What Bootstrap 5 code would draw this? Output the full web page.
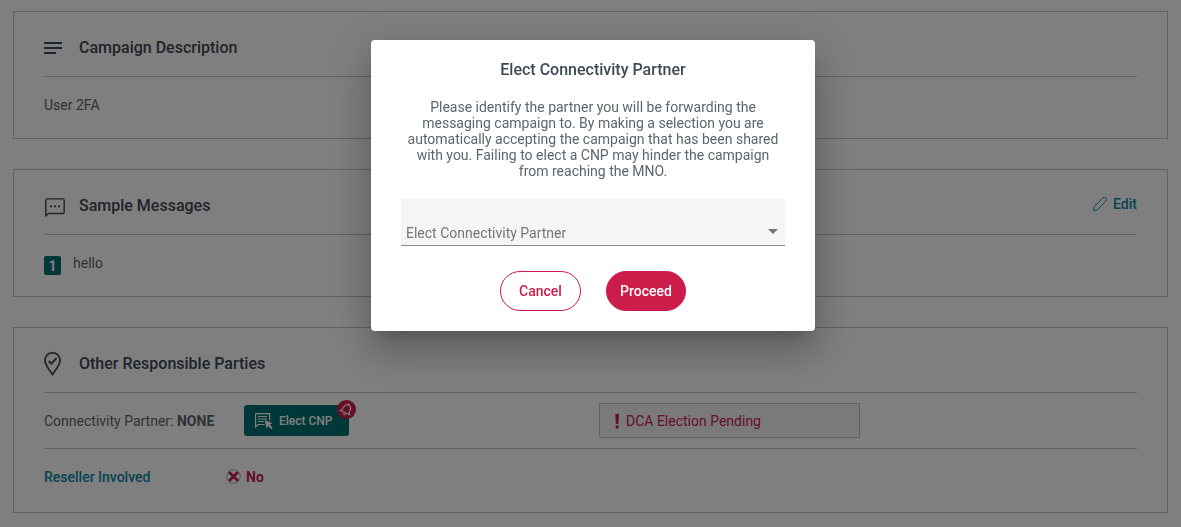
<!DOCTYPE html>
<html lang="en">
<head>
<meta charset="utf-8">
<meta name="viewport" content="width=device-width, initial-scale=1">
<title>Campaign details</title>
<link href="https://cdn.jsdelivr.net/npm/bootstrap@5.3.0/dist/css/bootstrap.min.css" rel="stylesheet">
<style>
  :root { --ink: #3f4a54; --soft: #5b666d; --line: #bcc4ca; --teal: #007074; --link: #0a88a2; --crimson: #cc1c4a; }
  body { font-family: Roboto, "Liberation Sans", sans-serif; font-size: 14px; line-height: 20px; color: var(--soft); padding: 11px 13px; }
  .panel-list { gap: 30px; }
  .panel { border: 1px solid var(--line); padding: 0 30px 5px; }
  .panel-parties { padding-bottom: 7px; }
  .panel-head { height: 65px; padding-top: 8px; border-bottom: 1px solid var(--line); }
  .panel-head h2, .modal-title { font-size: 16px; line-height: 24px; font-weight: 500; color: var(--ink); }
  .panel-icon { width: 35px; color: var(--ink); }
  .panel-line { height: 56px; }
  .panel-line.ruled { border-bottom: 1px solid var(--line); }
  .teal-link { color: var(--link); font-weight: 500; text-decoration: none; }
  .label-col { width: 200px; }
  .reseller-col { width: 182px; }
  .count-tag { width: 17px; height: 19px; border-radius: 2px; background: var(--teal); color: #fff; font-weight: 700; text-align: center; line-height: 20px; }
  .btn-elect { --bs-btn-bg: var(--teal); --bs-btn-color: #fff; --bs-btn-border-radius: 3px; --bs-btn-font-size: 12px; --bs-btn-font-weight: 500; --bs-btn-border-width: 0; width: 105px; height: 31px; padding: 0 10px; gap: 5px; }
  .bell { top: -5px; right: -7px; width: 19px; height: 19px; background: var(--crimson); }
  .status-col { margin-left: 250px; }
  .pending { width: 261px; height: 35px; padding-left: 14px; background: #f4f5f7; border: 1px solid var(--line); color: var(--crimson); }
  .no-flag { color: var(--crimson); font-weight: 700; }
  .modal { --bs-modal-width: 444px; padding-left: 5px; }
  .modal-dialog { margin-top: 40px; }
  .modal-content { border: 0; border-radius: 4px; padding: 18px 30px 20px; box-shadow: 0 11px 15px -7px rgba(0,0,0,.2), 0 24px 38px 3px rgba(0,0,0,.14), 0 9px 46px 8px rgba(0,0,0,.12); color: var(--soft); }
  .modal-text { line-height: 16px; margin: 17px 0 20px; }
  .partner-select { height: 47px; padding: 22px 30px 0 5px; font-size: 14px; color: #757575; border: 0; border-bottom: 1px solid #8a8a8a; border-radius: 0;
    background: #f4f5f7 url("data:image/svg+xml,%3Csvg xmlns='http://www.w3.org/2000/svg' viewBox='0 0 10 5'%3E%3Cpath fill='%23757575' d='M0 0h10L5 5z'/%3E%3C/svg%3E") no-repeat right 7px top 30px / 10px 5px; }
  .actions { gap: 25px; margin-top: 25px; }
  .btn-round { --bs-btn-font-size: 14px; --bs-btn-font-weight: 500; --bs-btn-border-color: var(--crimson); --bs-btn-color: var(--crimson); width: 81px; height: 40px; padding: 0; }
  .btn-round.solid { --bs-btn-bg: var(--crimson); --bs-btn-color: #fff; width: 80px; }
</style>
</head>
<body>
<main class="panel-list d-flex flex-column">
  <section class="panel">
    <header class="panel-head d-flex align-items-center">
      <span class="panel-icon d-flex"><svg width="18" height="12" viewBox="0 0 18 12" fill="currentColor" aria-hidden="true"><path d="M0 0h18v2H0zM0 5h18v2H0zM0 10h12v2H0z"/></svg></span>
      <h2 class="m-0">Campaign Description</h2>
    </header>
    <div class="panel-line d-flex align-items-center">User 2FA</div>
  </section>

  <section class="panel">
    <header class="panel-head d-flex align-items-center">
      <span class="panel-icon d-flex"><svg class="mt-1" width="22" height="20" viewBox="0 0 22 20" fill="none" stroke="currentColor" stroke-width="1.400" aria-hidden="true"><path d="M1.800 18V2.300q0-1.400 1.400-1.400h15.600q1.400 0 1.400 1.400v11.800q0 1.400-1.400 1.400H4.400z" stroke-linejoin="round"/><path d="M6 8.300h2M10 8.300h2M14 8.300h2" stroke-width="1.800"/></svg></span>
      <h2 class="m-0">Sample Messages</h2>
      <a href="#" class="teal-link d-flex align-items-center ms-auto pb-1"><svg class="me-1" width="17" height="16" viewBox="0 0 17 16" fill="none" stroke="currentColor" aria-hidden="true"><path d="M1.500 14.500l.7-4L10.700 2q1.600-1.300 3 .1t.2 3L5.500 13.700z" stroke-linejoin="round"/></svg>Edit</a>
    </header>
    <div class="panel-line d-flex align-items-center">
      <span class="count-tag mt-1">1</span><span class="ms-2 ps-1">hello</span>
    </div>
  </section>

  <section class="panel panel-parties">
    <header class="panel-head d-flex align-items-center">
      <span class="panel-icon d-flex"><svg width="18" height="26" viewBox="0 0 18 26" fill="none" stroke="currentColor" stroke-width="1.800" aria-hidden="true"><path d="M8.500 23.500C5.500 19 1 14 1 9.500a7.500 7.800 0 0 1 15 0c0 4.500-4.500 9.500-7.500 14z"/><path d="M4.600 10l2.800 2.600 5.300-5.800" stroke-width="2"/></svg></span>
      <h2 class="m-0">Other Responsible Parties</h2>
    </header>
    <div class="panel-line ruled d-flex align-items-center">
      <div class="label-col">Connectivity Partner: <span class="fw-bold">NONE</span></div>
      <button type="button" class="btn btn-elect position-relative d-flex align-items-center">
        <svg width="20" height="18" viewBox="0 0 20 18" fill="none" stroke="currentColor" stroke-width="1.200" aria-hidden="true"><path d="M10.500 12.500H4L1.600 15V1.600h14v7"/><path d="M4 4.500h9M4 7h9M4 9.500h6"/><path d="M10.500 8l8 3.200-2.800 1.300 3 3.300-1.500 1.400-3-3.200-1.500 2.600z" fill="currentColor" stroke="none"/></svg>
        <span>Elect CNP</span>
        <span class="bell position-absolute rounded-circle d-flex align-items-center justify-content-center"><svg width="15" height="15" viewBox="0 0 15 15" fill="none" stroke="currentColor" stroke-width="1.200" aria-hidden="true"><g transform="rotate(25 7.500 7.500)"><path d="M2.500 11Q4 9.500 4 6.500q0-4 3.500-4T11 6.500q0 3 1.500 4.500zM6 12.800h3M7.500 1v1.500"/></g></svg></span>
      </button>
      <div class="status-col">
        <div class="pending d-flex align-items-center"><svg class="me-1" width="8" height="16" viewBox="0 0 8 16" fill="currentColor" aria-hidden="true"><path d="M1.200 1h3.800l-.6 10H1.800z"/><circle cx="3.100" cy="14" r="1.700"/></svg>DCA Election Pending</div>
      </div>
    </div>
    <div class="panel-line d-flex align-items-center">
      <div class="reseller-col"><a href="#" class="teal-link">Reseller Involved</a></div>
      <span class="no-flag d-flex align-items-center"><svg class="me-1" width="16" height="16" viewBox="0 0 16 16" fill="none" aria-hidden="true"><circle cx="7.500" cy="7.500" r="6.800" stroke="#9aa9b2"/><path d="M3 3l9 9M12 3l-9 9" stroke="currentColor" stroke-width="2.600"/></svg>No</span>
    </div>
  </section>
</main>

<div class="modal d-block" tabindex="-1" role="dialog" aria-modal="true" aria-labelledby="elect-title">
  <div class="modal-dialog">
    <form class="modal-content text-center">
      <h1 class="modal-title" id="elect-title">Elect Connectivity Partner</h1>
      <p class="modal-text">Please identify the partner you will be forwarding the messaging campaign to. By making a selection you are automatically accepting the campaign that has been shared with you. Failing to elect a CNP may hinder the campaign from reaching the MNO.</p>
      <select class="form-select partner-select" aria-label="Elect Connectivity Partner"><option>Elect Connectivity Partner</option></select>
      <div class="actions d-flex justify-content-center">
        <button type="button" class="btn btn-round rounded-pill">Cancel</button>
        <button type="button" class="btn btn-round solid rounded-pill">Proceed</button>
      </div>
    </form>
  </div>
</div>
<div class="modal-backdrop show"></div>
<script src="https://cdn.jsdelivr.net/npm/bootstrap@5.3.0/dist/js/bootstrap.bundle.min.js"></script>
</body>
</html>
